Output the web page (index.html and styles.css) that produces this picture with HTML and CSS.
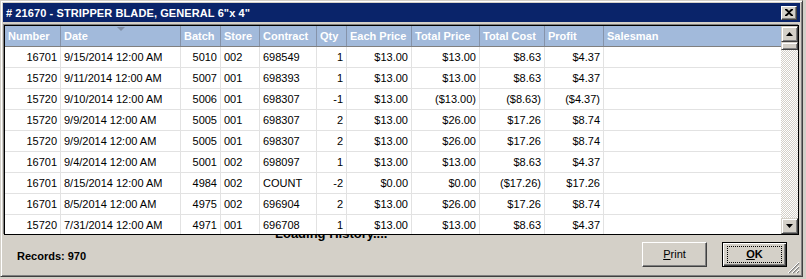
FILE: index.html
```html
<!DOCTYPE html>
<html>
<head>
    <meta charset="utf-8" />
    <title>History</title>
    <link rel="stylesheet" href="styles.css">
</head>
<body>
<div class="window">
    <div class="titlebar">
        <span class="title"># 21670 - STRIPPER BLADE, GENERAL 6"x 4"</span>
        <span class="close">
            <svg width="8" height="7" viewBox="0 0 8 7"><path d="M0 0h2l2 2 2-2h2v1L5 3.5 8 6v1H6L4 5 2 7H0V6l3-2.5L0 1z" fill="#000"/></svg>
        </span>
    </div>

    <div class="grid">
        <div class="table">
            <div class="row head">
                <div class="cell">Number</div>
                <div class="cell sorted">Date<i class="sort"></i></div>
                <div class="cell">Batch</div>
                <div class="cell">Store</div>
                <div class="cell">Contract</div>
                <div class="cell">Qty</div>
                <div class="cell">Each Price</div>
                <div class="cell">Total Price</div>
                <div class="cell">Total Cost</div>
                <div class="cell">Profit</div>
                <div class="cell last">Salesman</div>
            </div>
            <div class="row">
                <div class="cell r">16701</div><div class="cell">9/15/2014 12:00 AM</div><div class="cell r">5010</div><div class="cell">002</div><div class="cell">698549</div><div class="cell r">1</div><div class="cell r">$13.00</div><div class="cell r">$13.00</div><div class="cell r">$8.63</div><div class="cell r">$4.37</div><div class="cell last"></div>
            </div>
            <div class="row">
                <div class="cell r">15720</div><div class="cell">9/11/2014 12:00 AM</div><div class="cell r">5007</div><div class="cell">001</div><div class="cell">698393</div><div class="cell r">1</div><div class="cell r">$13.00</div><div class="cell r">$13.00</div><div class="cell r">$8.63</div><div class="cell r">$4.37</div><div class="cell last"></div>
            </div>
            <div class="row">
                <div class="cell r">15720</div><div class="cell">9/10/2014 12:00 AM</div><div class="cell r">5006</div><div class="cell">001</div><div class="cell">698307</div><div class="cell r">-1</div><div class="cell r">$13.00</div><div class="cell r">($13.00)</div><div class="cell r">($8.63)</div><div class="cell r">($4.37)</div><div class="cell last"></div>
            </div>
            <div class="row">
                <div class="cell r">15720</div><div class="cell">9/9/2014 12:00 AM</div><div class="cell r">5005</div><div class="cell">001</div><div class="cell">698307</div><div class="cell r">2</div><div class="cell r">$13.00</div><div class="cell r">$26.00</div><div class="cell r">$17.26</div><div class="cell r">$8.74</div><div class="cell last"></div>
            </div>
            <div class="row">
                <div class="cell r">15720</div><div class="cell">9/9/2014 12:00 AM</div><div class="cell r">5005</div><div class="cell">001</div><div class="cell">698307</div><div class="cell r">2</div><div class="cell r">$13.00</div><div class="cell r">$26.00</div><div class="cell r">$17.26</div><div class="cell r">$8.74</div><div class="cell last"></div>
            </div>
            <div class="row">
                <div class="cell r">16701</div><div class="cell">9/4/2014 12:00 AM</div><div class="cell r">5001</div><div class="cell">002</div><div class="cell">698097</div><div class="cell r">1</div><div class="cell r">$13.00</div><div class="cell r">$13.00</div><div class="cell r">$8.63</div><div class="cell r">$4.37</div><div class="cell last"></div>
            </div>
            <div class="row">
                <div class="cell r">16701</div><div class="cell">8/15/2014 12:00 AM</div><div class="cell r">4984</div><div class="cell">002</div><div class="cell">COUNT</div><div class="cell r">-2</div><div class="cell r">$0.00</div><div class="cell r">$0.00</div><div class="cell r">($17.26)</div><div class="cell r">$17.26</div><div class="cell last"></div>
            </div>
            <div class="row">
                <div class="cell r">16701</div><div class="cell">8/5/2014 12:00 AM</div><div class="cell r">4975</div><div class="cell">002</div><div class="cell">696904</div><div class="cell r">2</div><div class="cell r">$13.00</div><div class="cell r">$26.00</div><div class="cell r">$17.26</div><div class="cell r">$8.74</div><div class="cell last"></div>
            </div>
            <div class="row">
                <div class="cell r">15720</div><div class="cell">7/31/2014 12:00 AM</div><div class="cell r">4971</div><div class="cell">001</div><div class="cell">696708</div><div class="cell r">1</div><div class="cell r">$13.00</div><div class="cell r">$13.00</div><div class="cell r">$8.63</div><div class="cell r">$4.37</div><div class="cell last"></div>
            </div>
        </div>
        <div class="vscroll">
            <div class="sbtn"><svg width="7" height="4" viewBox="0 0 7 4"><path d="M3.5 0L7 4H0z" fill="#000"/></svg></div>
            <div class="thumb"></div>
            <div class="track"></div>
            <div class="sbtn"><svg width="7" height="4" viewBox="0 0 7 4"><path d="M0 0h7L3.5 4z" fill="#000"/></svg></div>
        </div>
    </div>

    <div class="footer">
        <span class="loading">Loading History....</span>
        <span class="records">Records: 970</span>
        <div class="buttons">
            <span class="btn"><u>P</u>rint</span>
            <span class="btn default"><span class="focus"><u>O</u>K</span></span>
        </div>
        <svg class="grip" width="12" height="12" viewBox="0 0 12 12">
            <path d="M11 1L1 11M11 5L5 11M11 9L9 11" stroke="#808080" stroke-width="1.4"/>
            <path d="M11 0L0 11M11 4L4 11M11 8L8 11" stroke="#fff" stroke-width="1"/>
        </svg>
    </div>
</div>
</body>
</html>
```

FILE: styles.css
```css
body{margin:0;width:806px;height:279px;overflow:hidden;background:#d4d0c8;font-family:"Liberation Sans",Arial,sans-serif;font-size:11px;color:#000;}
.window{width:803px;height:277px;box-sizing:border-box;border:1px solid;border-color:#d4d0c8 #404040 #404040 #d4d0c8;box-shadow:inset 1px 1px #fff,inset -1px -1px #808080;padding:2px;display:flex;flex-direction:column;background:#d4d0c8;}

/*标题栏*/
.titlebar{height:19px;flex:none;background:#0a246a;color:#fff;display:flex;align-items:center;justify-content:space-between;padding:0 3px;}
.title{font-weight:bold;font-size:11px;letter-spacing:0.1px;}
.close{width:16px;height:14px;box-sizing:border-box;background:#d4d0c8;border:1px solid;border-color:#fff #404040 #404040 #fff;box-shadow:inset -1px -1px #808080;display:flex;align-items:center;justify-content:center;}

/*表格*/
.grid{margin:3px 0 0 1px;width:795px;height:210px;flex:none;box-sizing:border-box;border:1px solid #000;box-shadow:-1px -1px 0 #808080;background:#fff;display:flex;position:relative;z-index:1;overflow:hidden;}
.table{width:776px;flex:none;overflow:hidden;}
.row{display:grid;grid-template-columns:56px 120px 40px 39px 57px 30px 65px 68px 65px 59px 177px;height:21px;box-sizing:border-box;border-bottom:1px solid #e2e2e2;}
.cell{border-right:1px solid #e2e2e2;padding:0 3px;line-height:20px;white-space:nowrap;overflow:hidden;}
.cell.r{text-align:right;}
.cell.last{border-right:none;}
.head{background:#a2badb;color:#fff;font-weight:bold;border-bottom:1px solid #808080;}
.head .cell{border-right-color:#8593aa;}
.sorted{position:relative;}
.sort{position:absolute;left:56px;top:1px;width:0;height:0;border-left:4px solid transparent;border-right:4px solid transparent;border-top:4px solid #7f8ea6;}

/*滚动条*/
.vscroll{width:17px;flex:none;display:flex;flex-direction:column;}
.sbtn,.thumb{box-sizing:border-box;background:#d4d0c8;border:1px solid;border-color:#d4d0c8 #404040 #404040 #d4d0c8;box-shadow:inset 1px 1px #fff,inset -1px -1px #808080;}
.sbtn{height:16px;display:flex;align-items:center;justify-content:center;}
.thumb{height:8px;}
.track{flex:1;background:repeating-conic-gradient(#fff 0 25%,#d4d0c8 0 50%) 0 0/2px 2px;}

/*底部*/
.footer{flex:1;position:relative;display:flex;align-items:center;padding:0 13px 1px 14px;}
.loading{position:absolute;left:272px;top:-9px;font-size:13px;font-weight:bold;line-height:16px;}
.records{font-weight:bold;margin-right:auto;margin-top:3px;}
.buttons{display:flex;gap:15px;}
.btn{width:65px;height:25px;box-sizing:border-box;display:flex;align-items:center;justify-content:center;background:#d4d0c8;border:1px solid;border-color:#fff #404040 #404040 #fff;box-shadow:inset -1px -1px #808080;}
.btn.default{border-color:#000;box-shadow:inset 1px 1px #fff,inset -1px -1px #404040,inset -2px -2px #808080;font-weight:bold;}
.focus{width:53px;height:15px;outline:1px dotted #000;display:flex;align-items:center;justify-content:center;}
.grip{position:absolute;right:0;bottom:0;}
```
